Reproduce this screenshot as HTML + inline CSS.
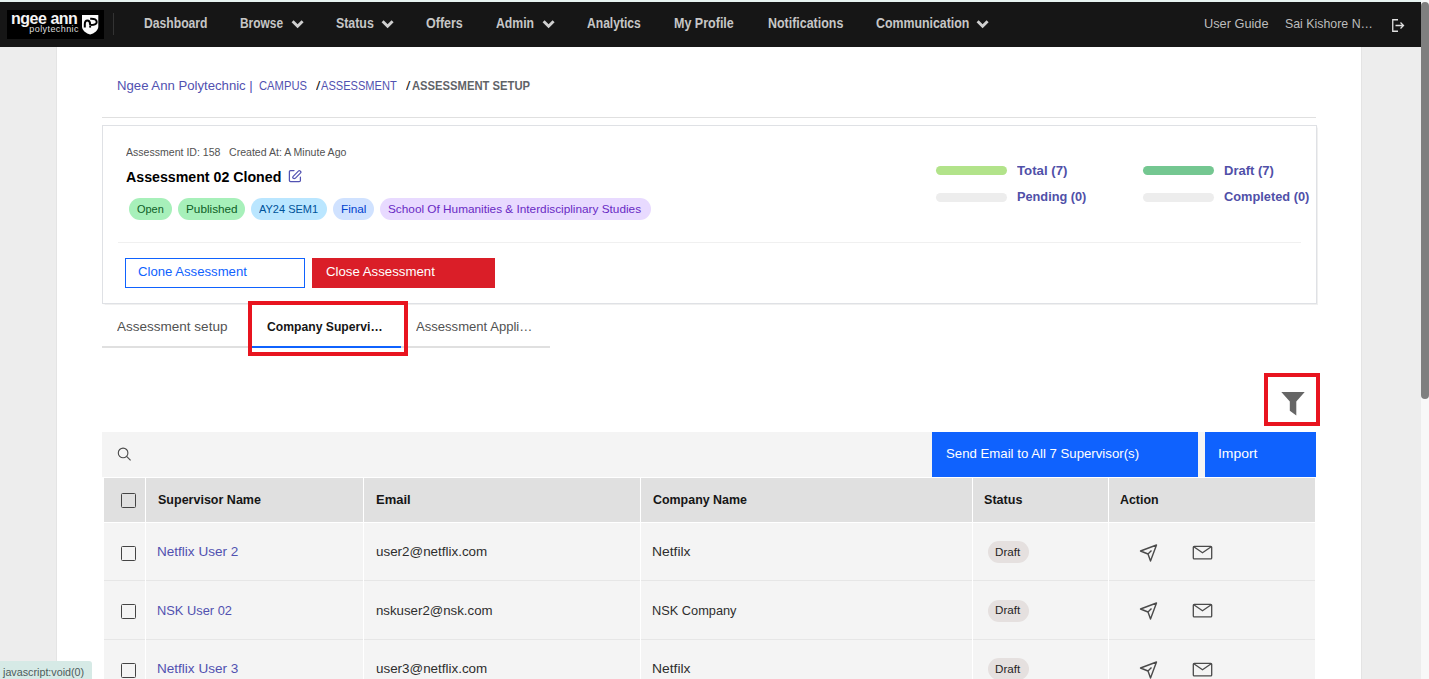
<!DOCTYPE html>
<html><head><meta charset="utf-8">
<style>
*{margin:0;padding:0;box-sizing:border-box}
html,body{width:1429px;height:679px;overflow:hidden;background:#ededed;font-family:"Liberation Sans",sans-serif}
.a{position:absolute}
.t{position:absolute;white-space:nowrap;line-height:normal;transform-origin:0 0;font-family:"Liberation Sans",sans-serif}
.pill{position:absolute;border-radius:12px}
.cb{position:absolute;width:15px;height:15px;border:1.3px solid #444;border-radius:1.5px}
</style></head><body>
<!-- top strip -->
<div class="a" style="left:0;top:0;width:1429px;height:2px;background:#e7f3f0"></div>
<!-- content white -->
<div class="a" style="left:57px;top:46px;width:1304px;height:633px;background:#fff"></div>
<div class="a" style="left:56px;top:46px;width:1px;height:633px;background:#e4e4e4"></div>
<div class="a" style="left:1361px;top:46px;width:1px;height:633px;background:#e4e4e4"></div>
<!-- nav -->
<div class="a" style="left:0;top:2px;width:1421px;height:44.5px;background:#161616"></div>
<div class="a" style="left:7px;top:10px;width:96.5px;height:28.5px;background:#000"></div>
<div class="t" style="left:10.5px;top:9px;font-size:16.5px;font-weight:700;color:#f4f4f4;letter-spacing:-0.5px;transform:scaleX(0.97)">ngee ann</div>
<div class="t" style="left:29.3px;top:23.8px;font-size:9px;color:#dedede;letter-spacing:0.42px">polytechnic</div>
<svg class="a" style="left:82px;top:15px" width="17" height="20" viewBox="0 0 17 20">
<path d="M0 0 H16.3 V11.5 C16.3 15.5 12 18.6 8.15 19.4 C4.3 18.6 0 15.5 0 11.5 Z" fill="#fafafa"/>
<path d="M2.8 12.6 V9.2 C2.8 6.6 3.9 5.4 5.3 5.4 C6.9 5.4 8.1 6.8 8.1 9.2 V10.3" stroke="#000" stroke-width="2" fill="none"/>
<path d="M8.2 3.8 C12.6 3.5 14.7 4.9 14.7 6.9 C14.7 8.9 12.3 9.9 8.6 9.9" stroke="#000" stroke-width="2" fill="none"/>
<rect x="7.2" y="10.6" width="1.9" height="2" fill="#000"/>
</svg>
<div class="a" style="left:113px;top:13px;width:1px;height:22px;background:#333"></div>
<!-- chevrons -->
<svg class="a" style="left:291px;top:19.3px" width="13" height="10" viewBox="0 0 13 10"><path d="M1.6 2.2 L6.6 7.2 L11.6 2.2" stroke="#cfcfcf" stroke-width="2.9" fill="none"/></svg>
<svg class="a" style="left:381px;top:19.3px" width="13" height="10" viewBox="0 0 13 10"><path d="M1.6 2.2 L6.6 7.2 L11.6 2.2" stroke="#cfcfcf" stroke-width="2.9" fill="none"/></svg>
<svg class="a" style="left:541.5px;top:19.3px" width="13" height="10" viewBox="0 0 13 10"><path d="M1.6 2.2 L6.6 7.2 L11.6 2.2" stroke="#cfcfcf" stroke-width="2.9" fill="none"/></svg>
<svg class="a" style="left:975.5px;top:19.3px" width="13" height="10" viewBox="0 0 13 10"><path d="M1.6 2.2 L6.6 7.2 L11.6 2.2" stroke="#cfcfcf" stroke-width="2.9" fill="none"/></svg>
<!-- logout icon -->
<svg class="a" style="left:1392px;top:18.5px" width="13" height="13" viewBox="0 0 13 13"><path d="M6 0.75 H0.75 V12.25 H6" stroke="#e0e0e0" stroke-width="1.3" fill="none"/><path d="M3.5 6.5 H11.5 M8.5 3.5 L11.5 6.5 L8.5 9.5" stroke="#e0e0e0" stroke-width="1.3" fill="none"/></svg>
<!-- scrollbar -->
<div class="a" style="left:1421px;top:0;width:8px;height:679px;background:#f8f8f8"></div>
<div class="a" style="left:1421px;top:2px;width:8px;height:397px;background:#7f7f7f;border-radius:4px"></div>

<!-- breadcrumb line -->
<div class="a" style="left:102px;top:117px;width:1214px;height:1px;background:#e0e0e0"></div>
<!-- card -->
<div class="a" style="left:102px;top:125px;width:1215px;height:179px;border:1px solid #dfe1e5;box-shadow:0.5px 0.5px 1px rgba(0,0,0,0.06)"></div>
<div class="a" style="left:118px;top:242px;width:1183px;height:1px;background:#f0f0f0"></div>
<!-- edit icon -->
<svg class="a" style="left:288px;top:169px" width="14" height="14" viewBox="0 0 14 14"><path d="M6 1.6 H2.6 Q1.4 1.6 1.4 2.8 V11.6 Q1.4 12.6 2.6 12.6 H11.2 Q12.4 12.6 12.4 11.4 V8.2" stroke="#5252b2" stroke-width="1.25" fill="none" stroke-linecap="round"/><path d="M4.9 9 Q4.4 8.1 5.2 7.3 L10.6 1.9 Q11.3 1.2 12 1.9 L12.6 2.5 Q13.3 3.2 12.6 3.9 L7.2 9.3 Q6.2 10 4.9 9 Z" stroke="#5252b2" stroke-width="1.2" fill="none" stroke-linejoin="round"/></svg>
<!-- pills -->
<div class="pill" style="left:129px;top:198px;width:42.5px;height:22px;background:#a7f0ba"></div>
<div class="pill" style="left:178px;top:198px;width:66.5px;height:22px;background:#a7f0ba"></div>
<div class="pill" style="left:251px;top:198px;width:75.5px;height:22px;background:#bae6ff"></div>
<div class="pill" style="left:333px;top:198px;width:41px;height:22px;background:#d0e2ff"></div>
<div class="pill" style="left:380px;top:198px;width:270.5px;height:22px;background:#e8daff"></div>
<!-- buttons -->
<div class="a" style="left:125px;top:258px;width:180px;height:30px;border:1px solid #0f62fe"></div>
<div class="a" style="left:312px;top:258px;width:183px;height:30px;background:#da1e28"></div>
<!-- stat bars -->
<div class="a" style="left:936px;top:166px;width:71px;height:9px;border-radius:5px;background:#b2e38a"></div>
<div class="a" style="left:936px;top:192.5px;width:71px;height:9px;border-radius:5px;background:#ededed"></div>
<div class="a" style="left:1143px;top:166px;width:70.5px;height:9px;border-radius:5px;background:#74c791"></div>
<div class="a" style="left:1143px;top:192.5px;width:70.5px;height:9px;border-radius:5px;background:#ededed"></div>

<!-- tabs -->
<div class="a" style="left:102px;top:346px;width:448px;height:2px;background:#e0e0e0"></div>
<div class="a" style="left:252px;top:345.5px;width:149px;height:2.5px;background:#0f62fe"></div>
<div class="a" style="left:248px;top:301px;width:160px;height:55px;border:4px solid #e8141f"></div>

<!-- filter -->
<div class="a" style="left:1264px;top:373px;width:56px;height:53px;border:4px solid #e8141f"></div>
<svg class="a" style="left:1281px;top:392px" width="24" height="24" viewBox="0 0 24 24"><path d="M0.3 0 H23.7 L15.3 9.4 V23.5 L8.8 18.8 V9.4 Z" fill="#666"/></svg>

<!-- search/toolbar -->
<div class="a" style="left:102px;top:432px;width:1214px;height:45px;background:#f4f4f4"></div>
<svg class="a" style="left:116px;top:446px" width="17" height="17" viewBox="0 0 17 17"><circle cx="7.1" cy="6.9" r="4.8" stroke="#4a4a4a" stroke-width="1.1" fill="none"/><path d="M10.6 10.4 L14.6 14.4" stroke="#4a4a4a" stroke-width="1.15"/></svg>
<div class="a" style="left:931.5px;top:432px;width:266.5px;height:45px;background:#0f62fe"></div>
<div class="a" style="left:1205px;top:432px;width:111px;height:45px;background:#0f62fe"></div>

<!-- table header -->
<div class="a" style="left:104px;top:478px;width:41px;height:43.5px;background:#e0e0e0"></div>
<div class="a" style="left:146px;top:478px;width:216.5px;height:43.5px;background:#e0e0e0"></div>
<div class="a" style="left:363.5px;top:478px;width:276.5px;height:43.5px;background:#e0e0e0"></div>
<div class="a" style="left:641px;top:478px;width:330.5px;height:43.5px;background:#e0e0e0"></div>
<div class="a" style="left:972.5px;top:478px;width:135.5px;height:43.5px;background:#e0e0e0"></div>
<div class="a" style="left:1109px;top:478px;width:206px;height:43.5px;background:#e0e0e0"></div>
<div class="cb" style="left:121px;top:493px"></div>

<!-- rows bg -->
<div class="a" style="left:104px;top:523px;width:1211px;height:156px;background:#f4f4f4"></div>
<div class="a" style="left:104px;top:580.3px;width:1211px;height:1px;background:#e6e6e6"></div>
<div class="a" style="left:104px;top:639px;width:1211px;height:1px;background:#e6e6e6"></div>
<div class="a" style="left:145px;top:523px;width:1px;height:156px;background:#fff"></div>
<div class="a" style="left:362.5px;top:523px;width:1px;height:156px;background:#fff"></div>
<div class="a" style="left:640px;top:523px;width:1px;height:156px;background:#fff"></div>
<div class="a" style="left:971.5px;top:523px;width:1px;height:156px;background:#fff"></div>
<div class="a" style="left:1108px;top:523px;width:1px;height:156px;background:#fff"></div>
<div class="cb" style="left:121px;top:546px"></div>
<div class="cb" style="left:121px;top:604px"></div>
<div class="cb" style="left:121px;top:662.5px"></div>
<!-- draft pills -->
<div class="pill" style="left:987.5px;top:541px;width:41px;height:22px;background:#e5e0df"></div>
<div class="pill" style="left:987.5px;top:599.6px;width:41px;height:22px;background:#e5e0df"></div>
<div class="pill" style="left:987.5px;top:658.2px;width:41px;height:22px;background:#e5e0df"></div>
<!-- action icons -->
<svg class="a" style="left:1139px;top:543.6px" width="19" height="19" viewBox="0 0 19 19"><path d="M1.5 7 L17.5 1 L11.5 17 L9 10 Z M9 10 L12.5 6.5" stroke="#4a4a4a" stroke-width="1.4" fill="none" stroke-linejoin="round"/></svg>
<svg class="a" style="left:1192px;top:544.5px" width="21" height="15" viewBox="0 0 21 15"><rect x="1.3" y="1.3" width="18.4" height="12.6" rx="1" stroke="#4a4a4a" stroke-width="1.3" fill="none"/><path d="M1.8 1.8 L10.5 7.8 L19.2 1.8" stroke="#4a4a4a" stroke-width="1.3" fill="none"/></svg>
<svg class="a" style="left:1139px;top:602.1px" width="19" height="19" viewBox="0 0 19 19"><path d="M1.5 7 L17.5 1 L11.5 17 L9 10 Z M9 10 L12.5 6.5" stroke="#4a4a4a" stroke-width="1.4" fill="none" stroke-linejoin="round"/></svg>
<svg class="a" style="left:1192px;top:603px" width="21" height="15" viewBox="0 0 21 15"><rect x="1.3" y="1.3" width="18.4" height="12.6" rx="1" stroke="#4a4a4a" stroke-width="1.3" fill="none"/><path d="M1.8 1.8 L10.5 7.8 L19.2 1.8" stroke="#4a4a4a" stroke-width="1.3" fill="none"/></svg>
<svg class="a" style="left:1139px;top:660.6px" width="19" height="19" viewBox="0 0 19 19"><path d="M1.5 7 L17.5 1 L11.5 17 L9 10 Z M9 10 L12.5 6.5" stroke="#4a4a4a" stroke-width="1.4" fill="none" stroke-linejoin="round"/></svg>
<svg class="a" style="left:1192px;top:661.5px" width="21" height="15" viewBox="0 0 21 15"><rect x="1.3" y="1.3" width="18.4" height="12.6" rx="1" stroke="#4a4a4a" stroke-width="1.3" fill="none"/><path d="M1.8 1.8 L10.5 7.8 L19.2 1.8" stroke="#4a4a4a" stroke-width="1.3" fill="none"/></svg>

<!-- status bar -->
<div class="a" style="left:0;top:661px;width:92px;height:18px;background:#d6eae6;border-top-right-radius:3px"></div>

<div class="t" style="left:144.00px;top:15.13px;font-size:14px;font-weight:700;color:#c6c6c6;transform:scaleX(0.8681)">Dashboard</div>
<div class="t" style="left:240.40px;top:15.13px;font-size:14px;font-weight:700;color:#c6c6c6;transform:scaleX(0.8506)">Browse</div>
<div class="t" style="left:336.00px;top:15.13px;font-size:14px;font-weight:700;color:#c6c6c6;transform:scaleX(0.8837)">Status</div>
<div class="t" style="left:426.40px;top:15.13px;font-size:14px;font-weight:700;color:#c6c6c6;transform:scaleX(0.8927)">Offers</div>
<div class="t" style="left:496.40px;top:15.13px;font-size:14px;font-weight:700;color:#c6c6c6;transform:scaleX(0.8744)">Admin</div>
<div class="t" style="left:587.00px;top:15.13px;font-size:14px;font-weight:700;color:#c6c6c6;transform:scaleX(0.8645)">Analytics</div>
<div class="t" style="left:674.40px;top:15.13px;font-size:14px;font-weight:700;color:#c6c6c6;transform:scaleX(0.8940)">My Profile</div>
<div class="t" style="left:767.50px;top:15.13px;font-size:14px;font-weight:700;color:#c6c6c6;transform:scaleX(0.8883)">Notifications</div>
<div class="t" style="left:875.50px;top:15.13px;font-size:14px;font-weight:700;color:#c6c6c6;transform:scaleX(0.8828)">Communication</div>
<div class="t" style="left:1203.76px;top:16.09px;font-size:13.6px;font-weight:400;color:#bdbdbd;transform:scaleX(0.9391)">User Guide</div>
<div class="t" style="left:1284.50px;top:16.09px;font-size:13.6px;font-weight:400;color:#bdbdbd;transform:scaleX(0.9095)">Sai Kishore N…</div>
<div class="t" style="left:116.89px;top:77.83px;font-size:13px;font-weight:400;color:#5151b0;transform:scaleX(1.0118)">Ngee Ann Polytechnic |</div>
<div class="t" style="left:259.00px;top:78.74px;font-size:12px;font-weight:400;color:#5151b0;transform:scaleX(0.9350)">CAMPUS</div>
<div class="t" style="left:315.60px;top:77.78px;font-size:13.5px;font-weight:400;color:#222222;transform:scaleX(1.1500)">/</div>
<div class="t" style="left:321.00px;top:78.74px;font-size:12px;font-weight:400;color:#5151b0;transform:scaleX(0.9227)">ASSESSMENT</div>
<div class="t" style="left:405.80px;top:77.78px;font-size:13.5px;font-weight:400;color:#222222;transform:scaleX(1.1500)">/</div>
<div class="t" style="left:412.00px;top:78.74px;font-size:12px;font-weight:700;color:#5f6368;transform:scaleX(0.9364)">ASSESSMENT SETUP</div>
<div class="t" style="left:125.50px;top:147.15px;font-size:10px;font-weight:400;color:#525252;transform:scaleX(1.0554)">Assessment ID: 158</div>
<div class="t" style="left:228.60px;top:147.15px;font-size:10px;font-weight:400;color:#525252;transform:scaleX(1.0559)">Created At: A Minute Ago</div>
<div class="t" style="left:125.50px;top:168.58px;font-size:14.5px;font-weight:700;color:#000000;transform:scaleX(0.9785)">Assessment 02 Cloned</div>
<div class="t" style="left:136.70px;top:202.64px;font-size:11px;font-weight:400;color:#0e6027;transform:scaleX(0.9966)">Open</div>
<div class="t" style="left:185.50px;top:202.64px;font-size:11px;font-weight:400;color:#0e6027;transform:scaleX(1.0686)">Published</div>
<div class="t" style="left:259.00px;top:202.64px;font-size:11px;font-weight:400;color:#00539a;transform:scaleX(1.0002)">AY24 SEM1</div>
<div class="t" style="left:341.00px;top:202.64px;font-size:11px;font-weight:400;color:#0043ce;transform:scaleX(1.0684)">Final</div>
<div class="t" style="left:388.40px;top:202.64px;font-size:11px;font-weight:400;color:#6929c4;transform:scaleX(1.0723)">School Of Humanities &amp; Interdisciplinary Studies</div>
<div class="t" style="left:1016.60px;top:162.83px;font-size:13px;font-weight:700;color:#5050a8;transform:scaleX(1.0171)">Total (7)</div>
<div class="t" style="left:1016.60px;top:189.13px;font-size:13px;font-weight:700;color:#5050a8;transform:scaleX(0.9795)">Pending (0)</div>
<div class="t" style="left:1223.50px;top:162.83px;font-size:13px;font-weight:700;color:#5050a8;transform:scaleX(0.9999)">Draft (7)</div>
<div class="t" style="left:1223.50px;top:189.13px;font-size:13px;font-weight:700;color:#5050a8;transform:scaleX(0.9845)">Completed (0)</div>
<div class="t" style="left:138.00px;top:264.24px;font-size:13px;font-weight:400;color:#0f62fe;transform:scaleX(1.0113)">Clone Assessment</div>
<div class="t" style="left:326.00px;top:264.24px;font-size:13px;font-weight:400;color:#ffffff;transform:scaleX(1.0182)">Close Assessment</div>
<div class="t" style="left:117.40px;top:318.78px;font-size:13.5px;font-weight:400;color:#525252;transform:scaleX(1.0010)">Assessment setup</div>
<div class="t" style="left:266.80px;top:318.78px;font-size:13.5px;font-weight:700;color:#161616;transform:scaleX(0.9008)">Company Supervi…</div>
<div class="t" style="left:415.90px;top:318.78px;font-size:13.5px;font-weight:400;color:#525252;transform:scaleX(0.9690)">Assessment Appli…</div>
<div class="t" style="left:945.50px;top:445.78px;font-size:13.5px;font-weight:400;color:#ffffff;transform:scaleX(0.9783)">Send Email to All 7 Supervisor(s)</div>
<div class="t" style="left:1217.77px;top:445.78px;font-size:13.5px;font-weight:400;color:#ffffff;transform:scaleX(1.0318)">Import</div>
<div class="t" style="left:157.60px;top:491.78px;font-size:13.5px;font-weight:700;color:#161616;transform:scaleX(0.9270)">Supervisor Name</div>
<div class="t" style="left:375.60px;top:491.78px;font-size:13.5px;font-weight:700;color:#161616;transform:scaleX(0.9612)">Email</div>
<div class="t" style="left:653.00px;top:491.78px;font-size:13.5px;font-weight:700;color:#161616;transform:scaleX(0.9208)">Company Name</div>
<div class="t" style="left:984.00px;top:491.78px;font-size:13.5px;font-weight:700;color:#161616;transform:scaleX(0.9325)">Status</div>
<div class="t" style="left:1120.00px;top:491.78px;font-size:13.5px;font-weight:700;color:#161616;transform:scaleX(0.9198)">Action</div>
<div class="t" style="left:156.76px;top:544.03px;font-size:13px;font-weight:400;color:#5151b0;transform:scaleX(1.0418)">Netflix User 2</div>
<div class="t" style="left:375.80px;top:544.03px;font-size:13px;font-weight:400;color:#2e2e2e;transform:scaleX(1.0316)">user2@netflix.com</div>
<div class="t" style="left:652.13px;top:544.03px;font-size:13px;font-weight:400;color:#2e2e2e;transform:scaleX(1.0669)">Netfilx</div>
<div class="t" style="left:995.00px;top:545.59px;font-size:11.5px;font-weight:400;color:#262424;transform:scaleX(1.0107)">Draft</div>
<div class="t" style="left:156.81px;top:602.53px;font-size:13px;font-weight:400;color:#5151b0;transform:scaleX(0.9875)">NSK User 02</div>
<div class="t" style="left:375.80px;top:602.53px;font-size:13px;font-weight:400;color:#2e2e2e;transform:scaleX(1.0192)">nskuser2@nsk.com</div>
<div class="t" style="left:652.22px;top:602.53px;font-size:13px;font-weight:400;color:#2e2e2e;transform:scaleX(0.9827)">NSK Company</div>
<div class="t" style="left:995.00px;top:604.09px;font-size:11.5px;font-weight:400;color:#262424;transform:scaleX(1.0107)">Draft</div>
<div class="t" style="left:156.76px;top:661.03px;font-size:13px;font-weight:400;color:#5151b0;transform:scaleX(1.0418)">Netflix User 3</div>
<div class="t" style="left:375.80px;top:661.03px;font-size:13px;font-weight:400;color:#2e2e2e;transform:scaleX(1.0316)">user3@netflix.com</div>
<div class="t" style="left:652.13px;top:661.03px;font-size:13px;font-weight:400;color:#2e2e2e;transform:scaleX(1.0669)">Netfilx</div>
<div class="t" style="left:995.00px;top:662.59px;font-size:11.5px;font-weight:400;color:#262424;transform:scaleX(1.0107)">Draft</div>
<div class="t" style="left:3.48px;top:665.54px;font-size:11px;font-weight:400;color:#4e5c5b;transform:scaleX(0.9763)">javascript:void(0)</div>
</body></html>
